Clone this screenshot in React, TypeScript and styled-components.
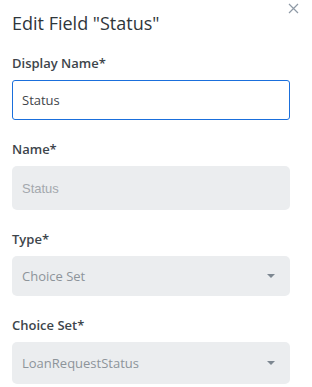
import styled, { createGlobalStyle } from "styled-components";

const Global = createGlobalStyle`
  html, body {
    margin: 0;
    padding: 0;
    background: #ffffff;
  }
  body {
    font-family: "Open Sans", "Noto Sans", sans-serif;
  }
`;

const Panel = styled.div`
  position: relative;
  width: 312px;
  height: 387px;
  box-sizing: border-box;
  padding: 11px 22px 0 12px;
  overflow: hidden;
`;

const CloseButton = styled.button`
  position: absolute;
  top: 2px;
  right: 13px;
  width: 12px;
  height: 12px;
  padding: 0;
  border: 0;
  background: none;
  cursor: pointer;
  display: flex;
  align-items: center;
  justify-content: center;
`;

const Title = styled.h2`
  margin: 0;
  font-size: 18px;
  line-height: 24px;
  font-weight: 500;
  color: #2f363b;
`;

const Form = styled.form`
  display: flex;
  flex-direction: column;
  gap: 20px;
  margin-top: 19px;
`;

const Field = styled.div`
  display: flex;
  flex-direction: column;
  gap: 8px;
`;

const Label = styled.label`
  font-size: 13px;
  line-height: 18px;
  font-weight: 600;
  color: #3d454b;
`;

const TextInput = styled.input`
  box-sizing: border-box;
  width: 100%;
  height: 40px;
  padding: 0 9px;
  border: 1px solid #1a6fdc;
  border-radius: 3px;
  font-family: "Open Sans", "Noto Sans", sans-serif;
  font-size: 13px;
  color: #3f454a;
  background: #fff;
  outline: none;
  caret-color: #1a6fdc;
`;

const ReadOnlyBox = styled.div<{ $height?: number; $arial?: boolean }>`
  box-sizing: border-box;
  height: ${(p) => p.$height ?? 40}px;
  display: flex;
  align-items: center;
  justify-content: space-between;
  padding: 0 15px 0 10px;
  background: #ebedef;
  border-radius: 5px;
  font-family: ${(p) =>
    p.$arial ? `"Liberation Sans", Arial, sans-serif` : `"Open Sans", "Noto Sans", sans-serif`};
  font-size: 13px;
  color: ${(p) => (p.$arial ? "#a3a8ad" : "#8d949a")};
`;

const Caret = styled.span`
  width: 0;
  height: 0;
  border-left: 4.5px solid transparent;
  border-right: 4.5px solid transparent;
  border-top: 4.5px solid #7d8791;
`;

export default function App() {
  return (
    <>
      <Global />
      <Panel>
        <CloseButton aria-label="Close">
          <svg width="11" height="11" viewBox="0 0 11 11">
            <path d="M1 1L10 10M10 1L1 10" stroke="#8f9aa6" strokeWidth="1.2" />
          </svg>
        </CloseButton>
        <Title>Edit Field "Status"</Title>
        <Form onSubmit={(e) => e.preventDefault()}>
          <Field>
            <Label>Display Name*</Label>
            <TextInput defaultValue="Status" autoFocus />
          </Field>
          <Field>
            <Label>Name*</Label>
            <ReadOnlyBox $height={44} $arial>Status</ReadOnlyBox>
          </Field>
          <Field>
            <Label>Type*</Label>
            <ReadOnlyBox>
              Choice Set
              <Caret />
            </ReadOnlyBox>
          </Field>
          <Field>
            <Label>Choice Set*</Label>
            <ReadOnlyBox $height={42}>
              LoanRequestStatus
              <Caret />
            </ReadOnlyBox>
          </Field>
        </Form>
      </Panel>
    </>
  );
}
